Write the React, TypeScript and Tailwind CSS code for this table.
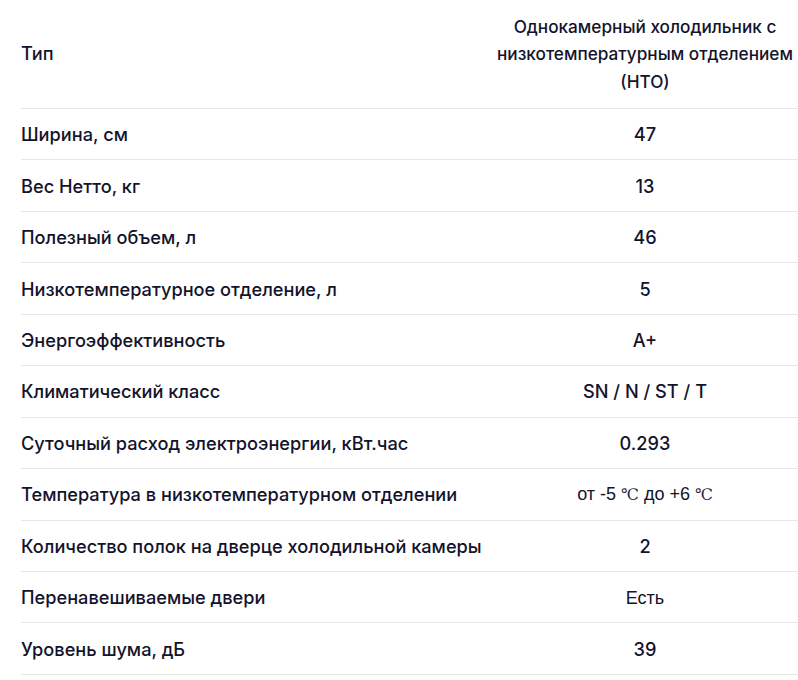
const rows: { label: string; value: string; alt?: boolean }[] = [
  { label: 'Ширина, см', value: '47' },
  { label: 'Вес Нетто, кг', value: '13' },
  { label: 'Полезный объем, л', value: '46' },
  { label: 'Низкотемпературное отделение, л', value: '5' },
  { label: 'Энергоэффективность', value: 'A+' },
  { label: 'Климатический класс', value: 'SN / N / ST / T' },
  { label: 'Суточный расход электроэнергии, кВт.час', value: '0.293' },
  { label: 'Температура в низкотемпературном отделении', value: 'temp', alt: true },
  { label: 'Количество полок на дверце холодильной камеры', value: '2' },
  { label: 'Перенавешиваемые двери', value: 'Есть', alt: true },
  { label: 'Уровень шума, дБ', value: '39' },
];

function TempValue() {
  return (
    <span className="font-['Liberation_Sans',Arial,sans-serif] text-[18px]">
      от -5 <span className="font-['DejaVu_Serif',serif] text-[16px] font-normal text-[#2a2a40]">℃</span> до +6{' '}
      <span className="font-['DejaVu_Serif',serif] text-[16px] font-normal text-[#2a2a40]">℃</span>
    </span>
  );
}

export default function App() {
  return (
    <div className="min-h-screen bg-white font-['Inter','Noto_Sans',sans-serif] text-[18.2px] font-medium text-[#13132b]">
      <div className="ml-[21px]">
        <div className="grid h-[109px] grid-cols-[1fr_306px] items-center border-b border-[#e6e6e6]">
          <div className="leading-[27.5px]">Тип</div>
          <div className="text-center text-[17.2px] leading-[27.5px]">Однокамерный холодильник с низкотемпературным отделением (НТО)</div>
        </div>
        {rows.map((r) => (
          <div key={r.label} className="grid h-[51.45px] grid-cols-[1fr_306px] items-center border-b border-[#e6e6e6]">
            <div className="leading-[26px]">{r.label}</div>
            <div className="text-center leading-[26px]">
              {r.value === 'temp' ? (
                <TempValue />
              ) : r.alt ? (
                <span className="font-['Liberation_Sans',Arial,sans-serif] text-[18px]">{r.value}</span>
              ) : (
                r.value
              )}
            </div>
          </div>
        ))}
      </div>
    </div>
  );
}
